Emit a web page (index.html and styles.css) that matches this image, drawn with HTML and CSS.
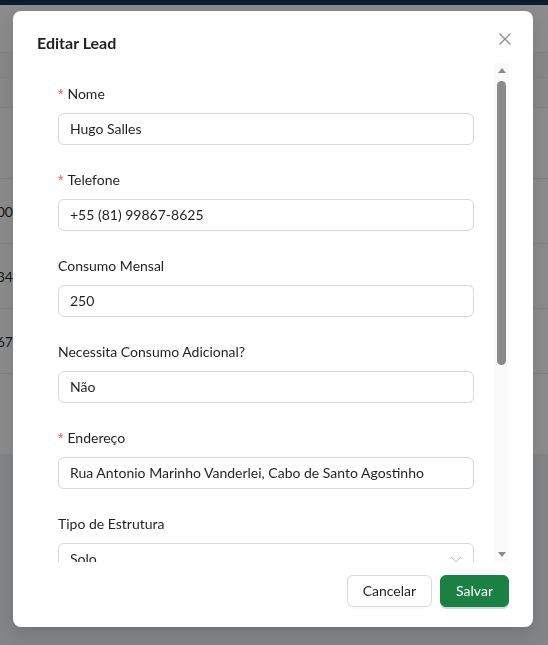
FILE: index.html
```html
<!DOCTYPE html>
<html lang="pt-BR">
<head>
<meta charset="utf-8">
<title>Editar Lead</title>
<link rel="stylesheet" href="styles.css">
</head>
<body>
<div class="page">
  <div class="topbar"></div>
  <div class="toolbar"></div>
  <div class="spacer"></div>
  <div class="table">
    <div class="thead"></div>
    <div class="row first"></div>
    <div class="row"><div class="cell">R$ 1.900</div></div>
    <div class="row"><div class="cell">R$ 2.034</div></div>
    <div class="row"><div class="cell">R$ 3.567</div></div>
    <div class="row last"></div>
  </div>
</div>

<div class="mask">
  <div class="modal">
    <button class="close" aria-label="Fechar">
      <svg width="12" height="12" viewBox="0 0 12 12"><path d="M0.5 0.5 L11.5 11.5 M11.5 0.5 L0.5 11.5" stroke="#8c8c8c" stroke-width="1.3" fill="none"/></svg>
    </button>
    <div class="modal-title">Editar Lead</div>
    <div class="modal-body">
      <div class="form">
        <div class="item">
          <label class="label"><span class="req">*</span>Nome</label>
          <div class="input">Hugo Salles</div>
        </div>
        <div class="item">
          <label class="label"><span class="req">*</span>Telefone</label>
          <div class="input">+55 (81) 99867-8625</div>
        </div>
        <div class="item">
          <label class="label">Consumo Mensal</label>
          <div class="input">250</div>
        </div>
        <div class="item">
          <label class="label">Necessita Consumo Adicional?</label>
          <div class="input">Não</div>
        </div>
        <div class="item">
          <label class="label"><span class="req">*</span>Endereço</label>
          <div class="input">Rua Antonio Marinho Vanderlei, Cabo de Santo Agostinho</div>
        </div>
        <div class="item">
          <label class="label">Tipo de Estrutura</label>
          <div class="input select">
            <span>Solo</span>
            <svg class="chev" width="12" height="12" viewBox="0 0 12 12"><path d="M1 4 L6 9 L11 4" stroke="#bfbfbf" stroke-width="1" fill="none"/></svg>
          </div>
        </div>
      </div>
      <div class="scrollbar">
        <div class="arrow up"></div>
        <div class="thumb-area"><div class="thumb"></div></div>
        <div class="arrow down"></div>
      </div>
    </div>
    <div class="modal-footer">
      <button class="btn">Cancelar</button>
      <button class="btn primary">Salvar</button>
    </div>
  </div>
</div>
</body>
</html>
```

FILE: styles.css
```css
* { box-sizing: border-box; }
html, body { margin: 0; padding: 0; }
body {
  width: 548px;
  height: 645px;
  overflow: hidden;
  background: #f0f2f5;
  font-family: "Segoe UI", Lato, "Liberation Sans", sans-serif;
  font-size: 14px;
  color: rgba(0,0,0,0.88);
}

/* background page */
.page { width: 548px; }
.topbar { height: 5px; background: #17345a; }
.toolbar { height: 48px; background: #ffffff; border-bottom: 1px solid #eeeeee; }
.spacer { height: 24px; background: #f7f7f7; }
.table { background: #ffffff; }
.thead { height: 31px; background: #fafafa; border-top: 1px solid #ececec; border-bottom: 1px solid #ececec; }
.row { height: 65px; border-bottom: 1px solid #ececec; display: flex; align-items: center; }
.row.first { height: 71px; }
.row.last { height: 80px; border-bottom: none; }
.cell {
  width: 13px;
  overflow: hidden;
  white-space: nowrap;
  direction: rtl;
  text-align: right;
  font-size: 14px;
  color: rgba(0,0,0,0.88);
}

/* mask & modal */
.mask {
  position: fixed;
  inset: 0;
  background: rgba(0,0,0,0.45);
}
.modal {
  position: absolute;
  top: 11px;
  left: 13px;
  width: 520px;
  background: #ffffff;
  border-radius: 8px;
  padding: 20px 24px;
  box-shadow: 0 6px 16px rgba(0,0,0,0.08), 0 3px 6px -4px rgba(0,0,0,0.12), 0 9px 28px 8px rgba(0,0,0,0.05);
}
.close {
  position: absolute;
  top: 17px;
  right: 17px;
  width: 22px;
  height: 22px;
  padding: 0;
  border: none;
  background: transparent;
  display: flex;
  align-items: center;
  justify-content: center;
}
.modal-title {
  font-size: 16px;
  line-height: 24px;
  font-weight: 700;
  margin-bottom: 8px;
}
.modal-body {
  height: 499px;
  display: flex;
}
.form {
  flex: 1;
  overflow: hidden;
  padding: 20px 20px 0 21px;
}
.item { margin-bottom: 24px; }
.label {
  display: block;
  line-height: 22px;
  padding-bottom: 8px;
}
.req {
  color: #ff4d4f;
  margin-right: 4px;
  font-family: "Liberation Sans", sans-serif;
}
.input {
  height: 32px;
  border: 1px solid #d9d9d9;
  border-radius: 6px;
  padding: 4px 11px;
  line-height: 22px;
  white-space: nowrap;
  overflow: hidden;
}
.select {
  display: flex;
  align-items: center;
  justify-content: space-between;
}

/* fake scrollbar */
.scrollbar {
  width: 15px;
  background: #fafafa;
  display: flex;
  flex-direction: column;
  align-items: center;
}
.arrow {
  width: 0;
  height: 0;
  border-left: 4px solid transparent;
  border-right: 4px solid transparent;
}
.arrow.up { border-bottom: 5px solid #8a8a8a; margin-top: 5px; }
.arrow.down { border-top: 5px solid #8a8a8a; margin-bottom: 5px; }
.thumb-area {
  flex: 1;
  width: 100%;
  padding: 8px 3px;
}
.thumb {
  width: 9px;
  height: 284px;
  background: #8a8a8a;
  border-radius: 5px;
}

/* footer */
.modal-footer {
  margin-top: 13px;
  display: flex;
  justify-content: flex-end;
  gap: 8px;
}
.btn {
  height: 32px;
  padding: 4px 15px;
  font-family: inherit;
  font-size: 14px;
  line-height: 22px;
  border-radius: 6px;
  border: 1px solid #d9d9d9;
  background: #ffffff;
  color: rgba(0,0,0,0.88);
  box-shadow: 0 2px 0 rgba(0,0,0,0.02);
}
.btn.primary {
  background: #1a8043;
  border-color: #1a8043;
  color: #ffffff;
  box-shadow: 0 2px 0 rgba(26,128,67,0.25);
}
```
